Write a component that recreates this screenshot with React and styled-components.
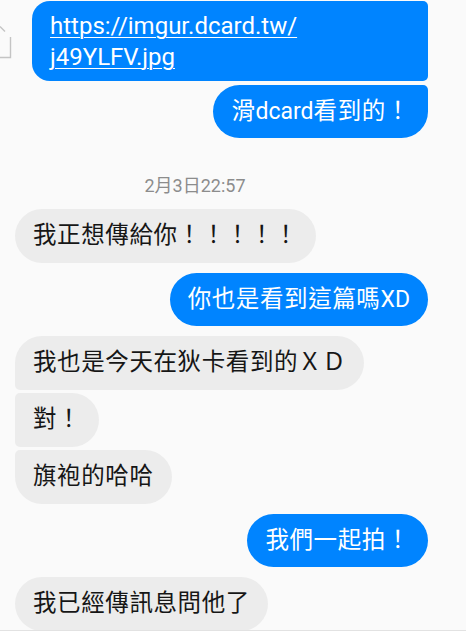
import React from 'react';
import styled, { createGlobalStyle, css } from 'styled-components';

const GlobalStyle = createGlobalStyle`
  html, body {
    margin: 0;
    padding: 0;
    background: #fafafa;
  }
`;

const BIG = '27px';
const SMALL = '5px';

// each message: who sent it, and where it sits in a run of bubbles
const messages = [
  { id: 1, mine: true, pos: 'middle', link: true, text: 'https://imgur.dcard.tw/ j49YLFV.jpg' },
  { id: 2, mine: true, pos: 'last', text: '滑dcard看到的！' },
  { id: 3, stamp: '2月3日22:57' },
  { id: 4, mine: false, pos: 'single', text: '我正想傳給你！！！！！' },
  { id: 5, mine: true, pos: 'single', text: '你也是看到這篇嗎XD' },
  { id: 6, mine: false, pos: 'first', text: '我也是今天在狄卡看到的ＸＤ' },
  { id: 7, mine: false, pos: 'middle', text: '對！' },
  { id: 8, mine: false, pos: 'last', text: '旗袍的哈哈' },
  { id: 9, mine: true, pos: 'single', text: '我們一起拍！' },
  { id: 10, mine: false, pos: 'single', text: '我已經傳訊息問他了' },
];

const corners = (mine, pos) => {
  const top = pos === 'single' || pos === 'first' ? BIG : SMALL;
  const bottom = pos === 'single' || pos === 'last' ? BIG : SMALL;
  return mine
    ? `${BIG} ${top} ${bottom} ${BIG}`
    : `${top} ${BIG} ${BIG} ${bottom}`;
};

// Latin runs keep normal spacing, CJK gets a bit of tracking
const splitRuns = (text) =>
  text.split(/([A-Za-z]+)/).filter(Boolean).map((part, i) =>
    /^[A-Za-z]+$/.test(part) ? <Latin key={i}>{part}</Latin> : part
  );

class App extends React.Component {
  render () {
    return (
      <Screen>
        <GlobalStyle />
        <Thread>
          {messages.map((m, i) => {
            if (m.stamp) {
              return <TimeStamp key={m.id}>{m.stamp}</TimeStamp>;
            }
            const prev = messages[i - 1];
            const gap = !prev ? 0 : prev.stamp ? 0 : prev.mine === m.mine ? 3.5 : 10;
            return (
              <Row key={m.id} $mine={m.mine} $gap={gap}>
                {m.link && (
                  <ShareIcon width="12" height="60" viewBox="0 0 12 60">
                    <path d="M0 15.5 L5 20.5 M10.5 26 V46.5 H0" fill="none" stroke="#c4c4c4" strokeWidth="1.4" />
                  </ShareIcon>
                )}
                <Bubble $mine={m.mine} $radius={corners(m.mine, m.pos)} $link={m.link}>
                  {m.link ? <LinkText>{m.text}</LinkText> : splitRuns(m.text)}
                </Bubble>
              </Row>
            );
          })}
        </Thread>
        <Composer />
      </Screen>
    );
  }
}

// Styled components
const Screen = styled.div`
  display: flex;
  flex-direction: column;
  height: 632px;
  width: 466px;
  overflow: hidden;
  background: #fafafa;
`;
const Thread = styled.div`
  flex: 1;
  overflow: hidden;
  display: flex;
  flex-direction: column;
  padding: 1px 38px 0 15px;
`;
const Row = styled.div`
  display: flex;
  align-items: center;
  justify-content: ${p => (p.$mine ? 'flex-end' : 'flex-start')};
  margin-top: ${p => p.$gap}px;
`;
const ShareIcon = styled.svg`
  flex: none;
  margin-left: -15px;
  margin-right: auto;
`;
const Bubble = styled.div`
  flex: none;
  box-sizing: border-box;
  padding: 11px 18px;
  border-radius: ${p => p.$radius};
  background: ${p => (p.$mine ? '#0084ff' : '#ececec')};
  color: ${p => (p.$mine ? '#ffffff' : '#161616')};
  font-family: Roboto, "Noto Sans CJK TC", sans-serif;
  font-size: 23.5px;
  letter-spacing: 0.6px;
  line-height: 31.5px;
  white-space: nowrap;
  ${p => p.$link && css`
    width: 396px;
    white-space: normal;
    padding: 10px 18px 9px;
    border-radius: 18px 5px 5px 18px;
    font-size: 24px;
    letter-spacing: 0;
    line-height: 30.5px;
  `}
`;
const Latin = styled.span`
  letter-spacing: 0;
  font-size: 23px;
`;
const LinkText = styled.span`
  text-decoration: underline;
  text-decoration-thickness: 1px;
  text-underline-offset: 3px;
`;
const TimeStamp = styled.div`
  margin: 38px 53px 13px 0;
  text-align: center;
  font-family: Roboto, "Noto Sans CJK TC", sans-serif;
  font-size: 18px;
  line-height: 20px;
  color: #8c8c8c;
`;
const Composer = styled.div`
  flex: none;
  height: 1px;
  border-top: 1px solid #e2e2e2;
  background: #ffffff;
`;

export default App;
